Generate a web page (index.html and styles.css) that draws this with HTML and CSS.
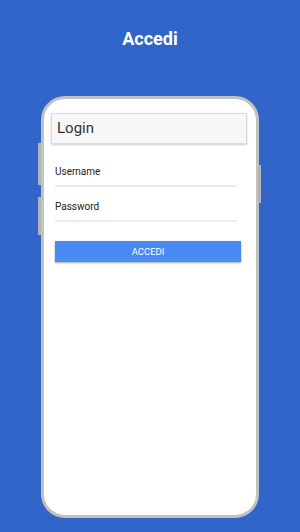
FILE: index.html
```html
<!DOCTYPE html>
<html>
<head>
<meta charset="utf-8">
<link rel="stylesheet" href="styles.css">
</head>
<body>
<div class="page">
  <h1 class="title">Accedi</h1>
  <div class="phone">
    <span class="side side-l1"></span>
    <span class="side side-l2"></span>
    <span class="side side-r1"></span>
    <div class="screen">
      <div class="appbar">Login</div>
      <div class="form">
        <div class="field field-user">Username</div>
        <div class="field field-pass">Password</div>
        <div class="btn">ACCEDI</div>
      </div>
    </div>
  </div>
</div>
</body>
</html>
```
FILE: styles.css
```css
html, body {
  margin: 0;
  padding: 0;
}
body {
  background: #3165c9;
  font-family: Roboto, "Liberation Sans", sans-serif;
}
.page {
  width: 300px;
  height: 532px;
  box-sizing: border-box;
  display: flex;
  flex-direction: column;
  align-items: center;
  overflow: hidden;
}
.title {
  margin: 28px 0 0;
  font-size: 18px;
  line-height: 21px;
  font-weight: 700;
  color: #ffffff;
}
.phone {
  position: relative;
  margin-top: 47px;
  width: 218px;
  height: 422px;
  box-sizing: border-box;
  border: 3px solid #c2c2c2;
  border-radius: 24px;
  background: #ffffff;
}
.side {
  position: absolute;
  width: 3px;
  background: #b4b4b4;
}
.side-l1 { left: -6px; top: 44px; height: 42px; }
.side-l2 { left: -6px; top: 98px; height: 38px; }
.side-r1 { right: -5px; top: 66px; height: 38px; }
.screen {
  display: flex;
  flex-direction: column;
}
.appbar {
  margin: 14px 9px 0 7px;
  height: 31px;
  box-sizing: border-box;
  border: 1px solid #dcdcdc;
  background: #f7f7f7;
  box-shadow: 0 1px 2px rgba(0, 0, 0, 0.2);
  padding-left: 5px;
  font-size: 15px;
  line-height: 29px;
  color: #333333;
}
.form {
  display: flex;
  flex-direction: column;
  padding: 0 0 0 11px;
}
.field {
  width: 182px;
  font-size: 10px;
  line-height: 12px;
  color: #222222;
  padding-bottom: 7px;
  border-bottom: 2px solid #ececec;
}
.field-user { margin-top: 22px; }
.field-pass { margin-top: 14px; }
.btn {
  margin-top: 19px;
  width: 186px;
  height: 21px;
  background: #4a8af4;
  color: #ffffff;
  font-size: 9.5px;
  line-height: 21px;
  text-align: center;
  box-shadow: 0 1px 2px rgba(0, 0, 0, 0.35);
}
```
